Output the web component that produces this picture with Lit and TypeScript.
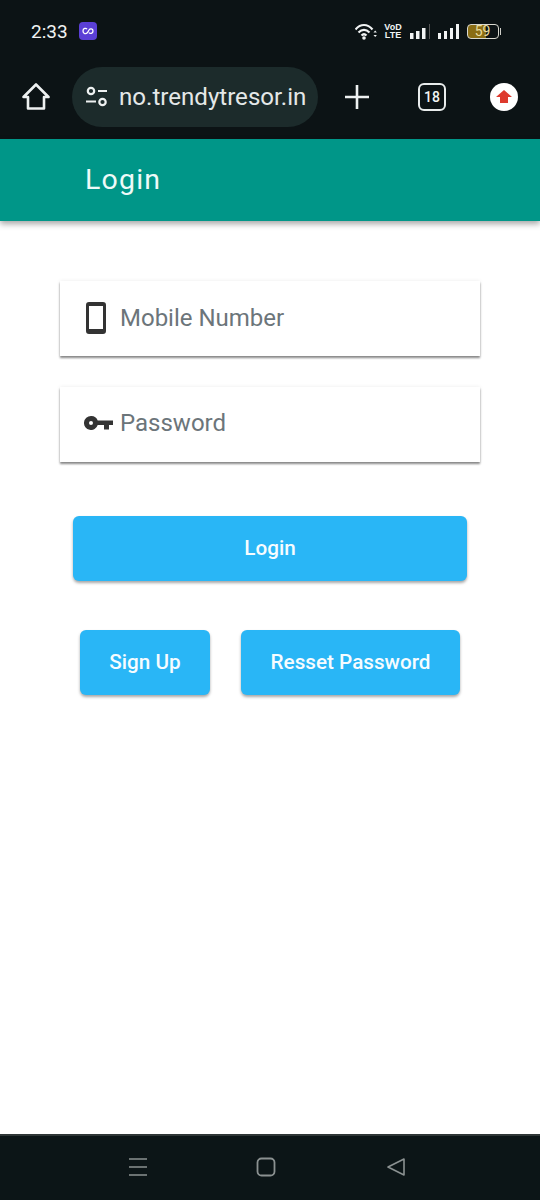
import { LitElement, html, css } from "lit";
import { customElement } from "lit/decorators.js";

@customElement("app-root")
export class AppRoot extends LitElement {
  static styles = css`
    :host { display: flex; flex-direction: column; width: 540px; height: 1200px; background: #fff; font-family: Roboto, "Noto Sans", sans-serif; overflow: hidden; }
    svg { display: block; flex: none; }
    .status { height: 62px; background: #0c1315; display: flex; align-items: center; padding: 0 39px 0 31px; box-sizing: border-box; color: #f1f3f3; }
    .time { font-size: 19px; font-weight: 400; width: 48px; }
    .spacer { flex: 1; }
    .sys { display: flex; align-items: center; }
    .vod { font-family: "Liberation Sans", sans-serif; font-size: 9px; line-height: 8px; font-weight: 700; width: 19px; margin: 0 7px 0 7px; text-align: center; white-space: nowrap; }
    .battery { width: 32px; height: 15px; border: 1.5px solid #d9d9d0; border-radius: 4px; box-sizing: border-box; position: relative; overflow: hidden; font-size: 14px; line-height: 12px; text-align: center; color: #e8dca0; font-weight: 400; background: linear-gradient(90deg, #8a6d14 59%, #0c1315 59%); margin-left: 7px; }
    .batcap { width: 1.5px; height: 7px; background: #cfcfc8; margin-left: 1px; }
    .toolbar { height: 77px; background: #0c1315; display: flex; padding: 5px 22px 12px; box-sizing: border-box; align-items: center; }
    .pill { height: 60px; width: 246px; margin-left: 22px; border-radius: 30px; background: #1c2b2b; display: flex; align-items: center; padding-left: 13px; box-sizing: border-box; gap: 10px; color: #e4e8e8; font-size: 24.1px; white-space: nowrap; }
    .plus { margin-left: 26px; }
    .tabs { margin-left: 48px; width: 28px; height: 28px; border: 2.500px solid #e9ecec; border-radius: 6px; box-sizing: border-box; color: #f1f3f3; font-size: 14px; font-weight: 500; display: flex; align-items: center; justify-content: center; }
    .avatar { margin-left: 44px; }
    .appbar { height: 82px; background: #009688; display: flex; align-items: center; padding: 0 0 2px 85px; box-sizing: border-box; color: #eefaf8; font-size: 28.5px; font-weight: 400; letter-spacing: 1.2px; box-shadow: 0 3px 6px rgba(0,0,0,.35); position: relative; }
    .main { flex: 1; display: flex; flex-direction: column; padding: 60px 60px 0; }
    .field { height: 75px; background: #fff; display: flex; align-items: center; padding: 0 0 2px 24px; box-sizing: border-box; box-shadow: 0 1.5px 2px rgba(0,0,0,.45), 0 0 4px rgba(0,0,0,.08); color: #6c757a; font-size: 24px; }
    .field + .field { margin-top: 31px; padding-bottom: 4px; }
    .ico { width: 24px; height: 32px; margin-right: 12px; display: flex; align-items: center; justify-content: center; }
    .btn { background: #29b6f6; color: #f6fcff; border-radius: 6px; height: 65px; padding-bottom: 2px; box-sizing: border-box; font-size: 20.7px; font-weight: 500; display: flex; align-items: center; justify-content: center; box-shadow: 0 2px 3px rgba(0,0,0,.35); }
    .login { margin: 54px 13px 0; }
    .row { display: flex; margin: 49px 20px 0; gap: 31px; }
    .signup { width: 130px; }
    .reset { width: 219px; }
    .nav { height: 66px; background: #0c1517; border-top: 2px solid #2f3636; box-sizing: border-box; display: flex; align-items: center; padding-bottom: 2px; }
    .nav svg.a { margin-left: 128px; }
    .nav svg.b { margin-left: 108px; }
    .nav svg.c { margin-left: 110px; }
  `;

  render() {
    return html`
      <div class="status">
        <div class="time">2:33</div>
        <svg width="18" height="18" viewBox="0 0 18 18"><rect width="18" height="18" rx="4" fill="#5b3fd6"/><path d="M8 7.2C7 5.8 4 6 4 9s3 3.2 4.5 1.5L10 8c1-1.6 4-1.6 4 1s-3 3-4 1.6" fill="none" stroke="#fff" stroke-width="1.3"/></svg>
        <div class="spacer"></div>
        <div class="sys">
          <svg width="22" height="17" viewBox="0 0 22 17" fill="none" stroke="#f1f3f3" stroke-width="2.200"><path d="M.5 6.500C5.500 .5 12.500 .5 17.500 6.500M3.500 9.500c3.500-3.500 7.500-3.500 11 0M6.500 12.500c1.500-1.500 3.500-1.500 5 0"/><circle cx="9" cy="15" r="1.800" fill="#f1f3f3" stroke="none"/><path d="M18.500 9.500l1.700-2 1.700 2zM18.500 12l1.700 2 1.700-2z" fill="#f1f3f3" stroke="none"/></svg>
          <div class="vod">VoD<br />LTE</div>
          <svg width="20" height="17" viewBox="0 0 20 17" fill="#f1f3f3"><rect x="0" y="10" width="3.500" height="6"/><rect x="6" y="8" width="3.500" height="8"/><rect x="12" y="5" width="3.500" height="11"/><rect x="19" y="1" width="1" height="15" fill="#555"/></svg>
          <svg style="margin-left:8px" width="22" height="17" viewBox="0 0 22 17" fill="#f1f3f3"><rect x="0" y="10" width="3" height="6"/><rect x="6" y="8" width="3" height="8"/><rect x="12" y="5" width="3" height="11"/><rect x="18" y="1" width="3" height="15"/></svg>
          <div class="battery">59</div><div class="batcap"></div>
        </div>
      </div>
      <div class="toolbar">
        <svg width="28" height="28" viewBox="0 0 28 28" fill="none" stroke="#eef1f1" stroke-width="2.600" stroke-linejoin="round"><path d="M1.500 14L14 1.500 26.500 14H22v11.500H6V14z"/></svg>
        <div class="pill">
          <svg width="24" height="24" viewBox="0 0 24 24" fill="none" stroke="#eef1f1" stroke-width="2.200"><circle cx="6" cy="6" r="3.200"/><path d="M13 6h9M1 16.500h10"/><circle cx="17.500" cy="17" r="3.200"/></svg>
          <span>no.trendytresor.in</span>
        </div>
        <svg class="plus" width="26" height="26" viewBox="0 0 26 26" stroke="#eef1f1" stroke-width="2.600"><path d="M1 13h24M13 1v24"/></svg>
        <div class="tabs">18</div>
        <svg class="avatar" width="28" height="28" viewBox="0 0 28 28"><circle cx="14" cy="14" r="14" fill="#fff"/><path d="M14 7l8 7h-4v6h-8v-6H6z" fill="#de3a2e"/></svg>
      </div>
      <div class="appbar">Login</div>
      <div class="main">
        <div class="field">
          <div class="ico"><svg width="20" height="32" viewBox="0 0 20 32"><path fill-rule="evenodd" d="M3 0h14a3 3 0 0 1 3 3v26a3 3 0 0 1-3 3H3a3 3 0 0 1-3-3V3a3 3 0 0 1 3-3zM3 4v23h14V4z" fill="#333"/></svg></div>
          Mobile Number
        </div>
        <div class="field">
          <div class="ico"><svg width="29" height="14" viewBox="0 0 29 14" style="margin-left:5px"><path fill-rule="evenodd" d="M7 0a7 7 0 0 1 6.700 4.500H29v4.500h-4v4.500h-5V9h-6.300A7 7 0 1 1 7 0zm0 5a2 2 0 1 0 0 4 2 2 0 0 0 0-4z" fill="#333"/></svg></div>
          Password
        </div>
        <div class="btn login">Login</div>
        <div class="row">
          <div class="btn signup">Sign Up</div>
          <div class="btn reset">Resset Password</div>
        </div>
      </div>
      <div class="nav">
        <svg class="a" width="20" height="20" viewBox="0 0 20 20" stroke="#8b9191" stroke-width="1.500"><path d="M1 2h18M1 10h18M1 18h18"/></svg>
        <svg class="b" width="20" height="20" viewBox="0 0 20 20" fill="none" stroke="#8b9191" stroke-width="1.800"><rect x="1.500" y="1.500" width="17" height="17" rx="4"/></svg>
        <svg class="c" width="20" height="20" viewBox="0 0 20 20" fill="none" stroke="#8b9191" stroke-width="1.600" stroke-linejoin="round"><path d="M18 2v16L2 10z"/></svg>
      </div>
    `;
  }
}
